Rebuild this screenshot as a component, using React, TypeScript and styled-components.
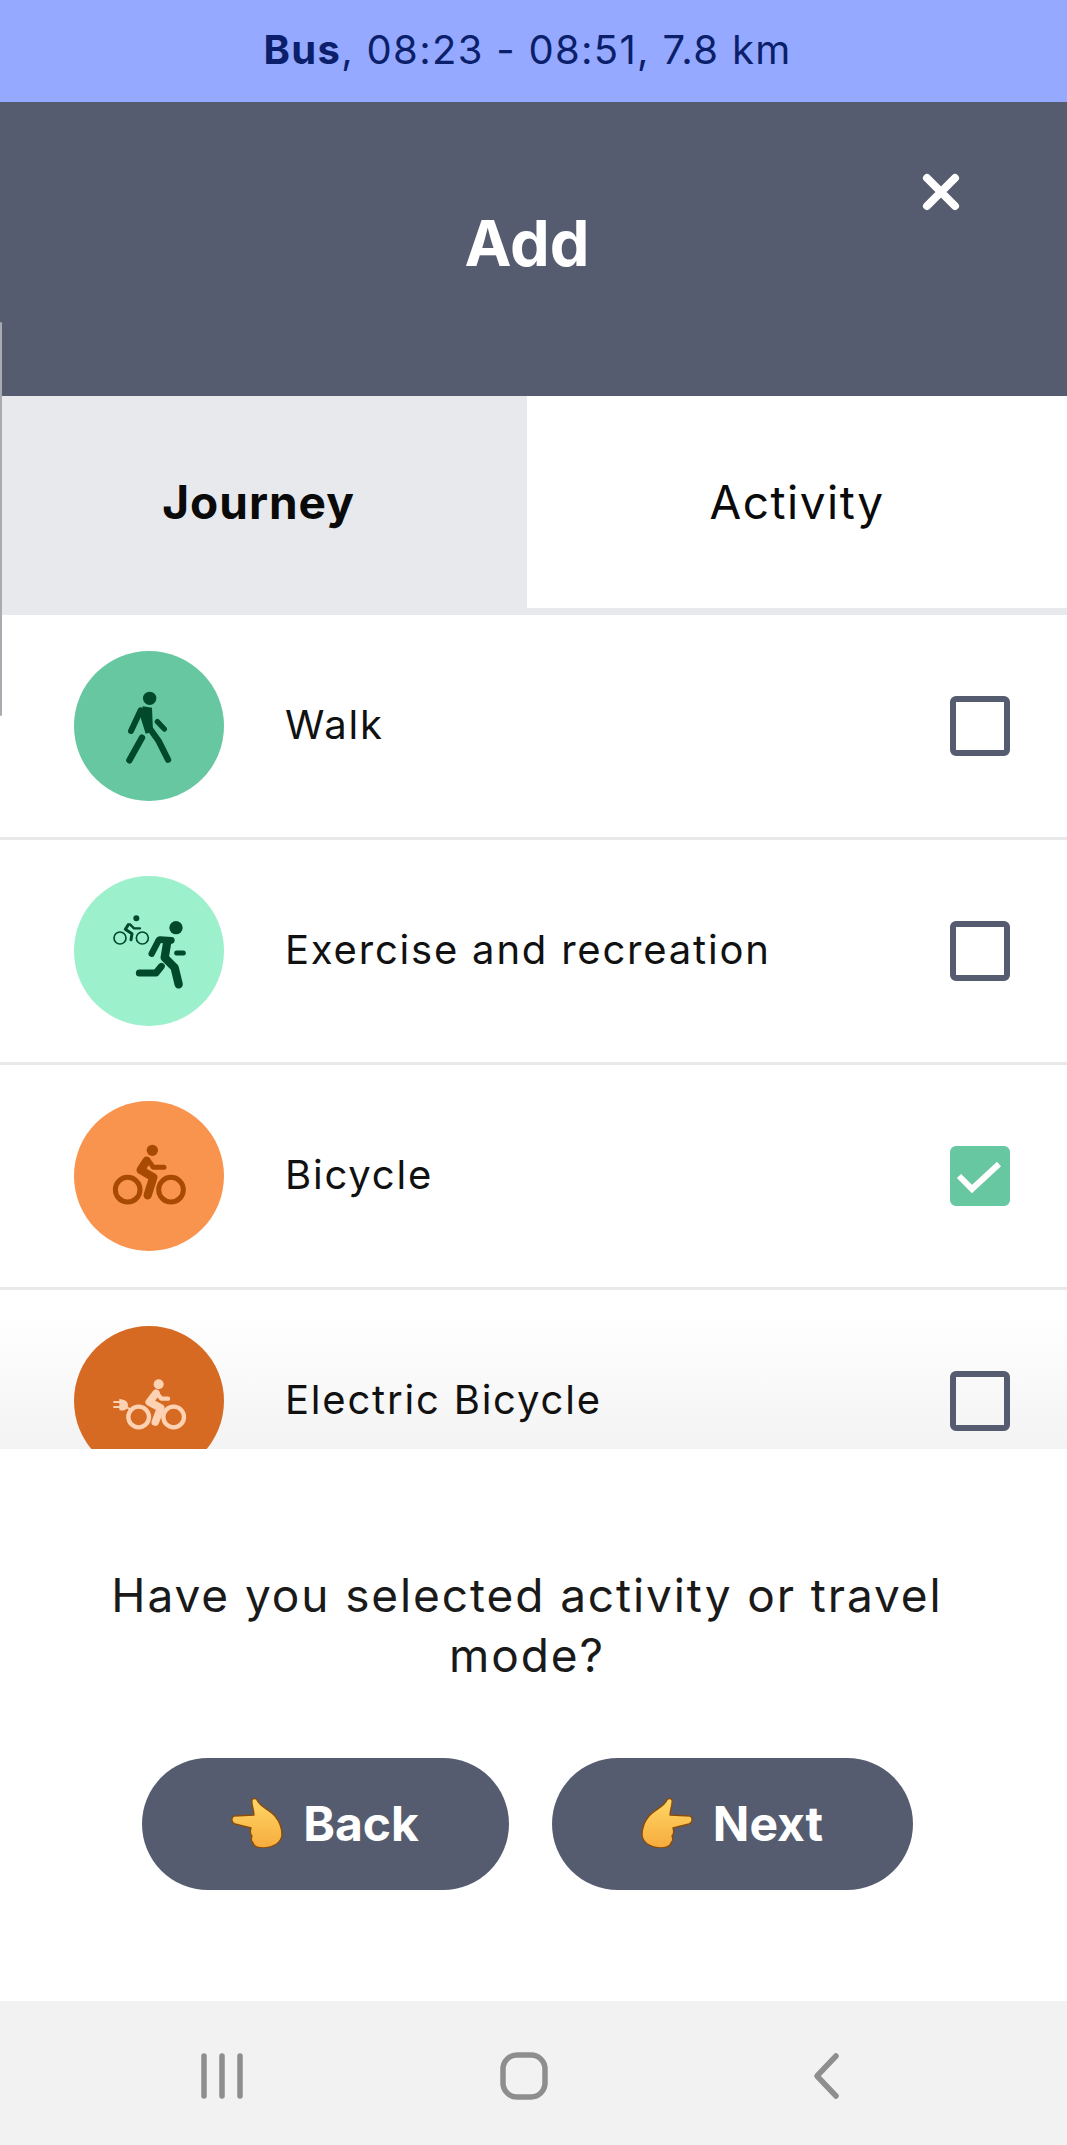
import React from 'react';
import styled, { createGlobalStyle } from 'styled-components';

const GlobalStyle = createGlobalStyle`
  html, body {
    margin: 0;
    padding: 0;
    background: #fff;
  }
  * {
    box-sizing: border-box;
  }
`;

const Screen = styled.div`
  width: 1067px;
  height: 2145px;
  position: relative;
  display: flex;
  flex-direction: column;
  overflow: hidden;
  background: #fff;
  font-family: Inter, 'Liberation Sans', sans-serif;
  color: #111;
`;

const EdgeLine = styled.div`
  position: absolute;
  left: 0;
  top: 322px;
  width: 2px;
  height: 394px;
  background: #a9abb0;
  border-radius: 2px;
`;

const TripBar = styled.div`
  height: 102px;
  flex: none;
  background: #94a9ff;
  color: #0b1f6b;
  display: flex;
  justify-content: center;
  align-items: center;
  padding: 0 12px 4px 0;
  font-size: 40px;
  letter-spacing: 1.3px;
  b {
    font-weight: 700;
  }
`;

const Header = styled.header`
  height: 294px;
  flex: none;
  position: relative;
  background: #565c70;
  color: #fff;
  display: flex;
  justify-content: center;
  align-items: center;
  padding: 0 13px 12px 0;
  font-size: 63px;
  font-weight: 700;
`;

const CloseIcon = styled.svg`
  position: absolute;
  right: 107px;
  top: 71px;
  width: 38px;
  height: 38px;
`;

const Tabs = styled.div`
  height: 219px;
  flex: none;
  display: grid;
  grid-template-columns: 527px 540px;
  padding-bottom: 7px;
  background: #e8e9ed;
`;

const Tab = styled.div<{ $active?: boolean }>`
  display: flex;
  justify-content: center;
  align-items: center;
  padding-right: ${({ $active }) => ($active ? 10 : 0)}px;
  font-size: 46px;
  letter-spacing: ${({ $active }) => ($active ? 1 : 1.5)}px;
  font-weight: ${({ $active }) => ($active ? 700 : 400)};
  background: ${({ $active }) => ($active ? '#e8e9ed' : '#fff')};
  color: #0a0a0a;
`;

const List = styled.div`
  height: 834px;
  flex: none;
  overflow: hidden;
  background: linear-gradient(to bottom, #fff 0, #fff 700px, #f3f3f3 834px);
`;

const Row = styled.div`
  height: 225px;
  display: flex;
  align-items: center;
  padding: 0 57px 1px 74px;
  border-bottom: 3px solid #e8e9ea;
`;

const Circle = styled.svg<{ $color: string }>`
  width: 150px;
  height: 150px;
  flex: none;
  border-radius: 50%;
  background: ${({ $color }) => $color};
`;

const Label = styled.span`
  flex: 1;
  margin-left: 61px;
  padding-bottom: 2px;
  font-size: 40px;
  letter-spacing: 1.8px;
  color: #111;
`;

const Checkbox = styled.div<{ $checked?: boolean }>`
  width: 60px;
  height: 60px;
  flex: none;
  border-radius: 6px;
  border: 6px solid ${({ $checked }) => ($checked ? '#66c7a1' : '#565c70')};
  background: ${({ $checked }) => ($checked ? '#66c7a1' : 'transparent')};
  display: flex;
  align-items: center;
  justify-content: center;
`;

const Footer = styled.div`
  flex: 1;
  display: flex;
  flex-direction: column;
  align-items: center;
  padding: 116px 13px 0 0;
`;

const Question = styled.p`
  width: 900px;
  margin: 0;
  text-align: center;
  font-size: 46px;
  line-height: 60px;
  letter-spacing: 1.9px;
  color: #1a1a1a;
`;

const Buttons = styled.div`
  display: flex;
  gap: 43px;
  margin-top: 73px;
`;

const PillButton = styled.button<{ $width: number }>`
  width: ${({ $width }) => $width}px;
  height: 132px;
  border: none;
  border-radius: 66px;
  background: #565c70;
  color: #fff;
  display: flex;
  align-items: center;
  justify-content: center;
  gap: 20px;
  padding: 0 0 2px;
  font-family: inherit;
  font-size: 48px;
  font-weight: 700;
`;

const Hand = styled.svg<{ $flip?: boolean }>`
  width: 52px;
  height: 50px;
  transform: ${({ $flip }) => ($flip ? 'scaleX(-1)' : 'none')};
`;

const NavBar = styled.nav`
  height: 144px;
  flex: none;
  background: #f2f2f2;
  display: flex;
  justify-content: space-between;
  align-items: center;
  padding: 5px 211px 0 192px;
`;

const NavIcon = styled.svg`
  width: 60px;
  height: 60px;
  fill: none;
  stroke: #8e8e8e;
  stroke-width: 5.5;
  stroke-linecap: round;
  stroke-linejoin: round;
`;

const WalkIcon = () => (
  <Circle $color="#66c7a1" viewBox="72 62 450 450">
    <g fill="none" stroke="#00492a" strokeLinecap="round" strokeLinejoin="round">
      <path d="M272 240 L243 302" strokeWidth="18" />
      <path d="M276 322 L238 390" strokeWidth="19" />
      <path d="M322 274 L343 296" strokeWidth="16" />
      <path d="M296 290 L326 332 L354 388" strokeWidth="19" />
    </g>
    <circle cx="299" cy="204" r="20" fill="#00492a" />
    <path d="M278 228 L306 232 L309 304 L287 310 L272 262 Z" fill="#00492a" />
  </Circle>
);

const ExerciseIcon = () => (
  <Circle $color="#9cf0cc" viewBox="72 47 450 450">
    <g fill="none" stroke="#00492a" strokeLinecap="round" strokeLinejoin="round">
      <circle cx="210" cy="233" r="18" strokeWidth="5" />
      <circle cx="277" cy="233" r="18" strokeWidth="5" />
      <path d="M235 193 L226 207 L246 220 L243 238" strokeWidth="9" />
      <path d="M240 192 L252 204 L270 204" strokeWidth="7" />
      <path d="M326 240 L305 280" strokeWidth="19" />
      <path d="M330 238 L364 240" strokeWidth="20" />
      <path d="M352 244 L344 292 L374 322 L386 372" strokeWidth="25" />
      <path d="M334 318 L318 338 L268 338" strokeWidth="21" />
      <path d="M380 278 L400 278" strokeWidth="15" />
    </g>
    <circle cx="259" cy="174" r="9" fill="#00492a" />
    <circle cx="378" cy="202" r="20" fill="#00492a" />
  </Circle>
);

const BicycleIcon = () => (
  <Circle $color="#f9944f" viewBox="72 33 450 450">
    <g fill="none" stroke="#a84b00" strokeLinecap="round" strokeLinejoin="round">
      <circle cx="233" cy="299" r="37" strokeWidth="15" />
      <circle cx="363" cy="299" r="37" strokeWidth="15" />
      <path d="M290 212 L272 240 L310 262 L293 316" strokeWidth="25" />
      <path d="M300 218 L310 232 L342 232" strokeWidth="15" />
    </g>
    <circle cx="307" cy="181" r="17" fill="#a84b00" />
  </Circle>
);

const ElectricIcon = () => (
  <Circle $color="#d66a23" viewBox="72 48 450 450">
    <g fill="none" stroke="#fcd2b3" strokeLinecap="round" strokeLinejoin="round">
      <circle cx="266" cy="321" r="31" strokeWidth="13" />
      <circle cx="371" cy="321" r="31" strokeWidth="13" />
      <path d="M318 250 L298 276 L332 294 L316 336" strokeWidth="23" />
      <path d="M326 256 L334 266 L354 266" strokeWidth="13" />
      <path d="M225 288 L240 298" strokeWidth="6" />
    </g>
    <circle cx="326" cy="223" r="15" fill="#fcd2b3" />
    <path
      d="M208 266 L222 270 C232 274 236 282 233 290 C230 300 222 304 208 300 Z M190 273 H208 V279 H190 Z M190 288 H208 V294 H190 Z"
      fill="#fcd2b3"
    />
  </Circle>
);

const HandEmoji = ({ flip }: { flip?: boolean }) => (
  <Hand $flip={flip} viewBox="0 0 52 50">
    <defs>
      <linearGradient id="handFill" x1="0" y1="0" x2="0" y2="1">
        <stop offset="0" stopColor="#ffd868" />
        <stop offset="1" stopColor="#f6ab3c" />
      </linearGradient>
    </defs>
    <path
      d="M3 18 L23 17 C23 12 20 6 21 2 C22 0 25 0 26 2 C29 9 38 11 44 18 C49 24 51 31 51 37 C50 45 42 49 33 50 C27 50 23 49 22 45 C20 43 20 40 21 38 C19 36 19 33 20 30 L4 26 C0 24 0 20 3 18 Z"
      fill="url(#handFill)"
      stroke="#8a4b0a"
      strokeWidth="1.4"
      strokeLinejoin="round"
    />
  </Hand>
);

const modes = [
  { label: 'Walk', icon: <WalkIcon /> },
  { label: 'Exercise and recreation', icon: <ExerciseIcon /> },
  { label: 'Bicycle', icon: <BicycleIcon />, checked: true },
  { label: 'Electric Bicycle', icon: <ElectricIcon /> },
];

const App = () => {
  return (
    <Screen>
      <GlobalStyle />
      <TripBar>
        <span>
          <b>Bus</b>, 08:23 - 08:51, 7.8 km
        </span>
      </TripBar>
      <Header>
        Add
        <CloseIcon viewBox="0 0 38 38">
          <path
            d="M5 5 L33 33 M33 5 L5 33"
            stroke="#fff"
            strokeWidth="8"
            strokeLinecap="round"
          />
        </CloseIcon>
      </Header>
      <Tabs>
        <Tab $active>Journey</Tab>
        <Tab>Activity</Tab>
      </Tabs>
      <List>
        {modes.map((mode) => (
          <Row key={mode.label}>
            {mode.icon}
            <Label>{mode.label}</Label>
            <Checkbox $checked={mode.checked}>
              {mode.checked && (
                <svg width="48" height="48" viewBox="6 6 48 48">
                  <path
                    d="M9 30 L22 43 L49 18"
                    fill="none"
                    stroke="#fff"
                    strokeWidth="6"
                  />
                </svg>
              )}
            </Checkbox>
          </Row>
        ))}
      </List>
      <Footer>
        <Question>Have you selected activity or travel mode?</Question>
        <Buttons>
          <PillButton $width={367}>
            <HandEmoji />
            Back
          </PillButton>
          <PillButton $width={361}>
            <HandEmoji flip />
            Next
          </PillButton>
        </Buttons>
      </Footer>
      <NavBar>
        <NavIcon viewBox="0 0 60 60">
          <path d="M12 10 V50 M30 10 V50 M48 10 V50" />
        </NavIcon>
        <NavIcon viewBox="0 0 60 60">
          <rect x="9" y="9" width="42" height="42" rx="14" />
        </NavIcon>
        <NavIcon viewBox="0 0 60 60">
          <path d="M40 10 L21 30 L40 50" />
        </NavIcon>
      </NavBar>
      <EdgeLine />
    </Screen>
  );
};

export default App;
